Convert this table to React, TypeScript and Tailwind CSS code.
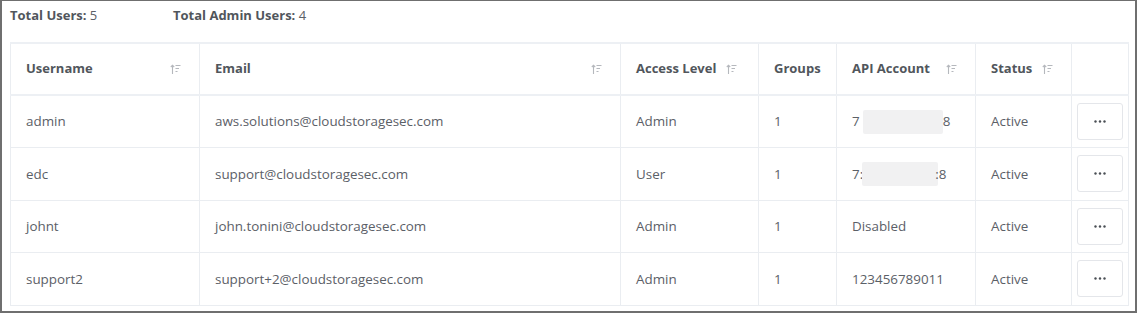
import React from 'react';

interface UserRow {
  username: string;
  email: string;
  access: string;
  groups: number;
  api: 'masked' | 'masked2' | string;
  status: string;
}

const rows: UserRow[] = [
  { username: 'admin', email: 'aws.solutions@cloudstoragesec.com', access: 'Admin', groups: 1, api: 'masked', status: 'Active' },
  { username: 'edc', email: 'support@cloudstoragesec.com', access: 'User', groups: 1, api: 'masked2', status: 'Active' },
  { username: 'johnt', email: 'john.tonini@cloudstoragesec.com', access: 'Admin', groups: 1, api: 'Disabled', status: 'Active' },
  { username: 'support2', email: 'support+2@cloudstoragesec.com', access: 'Admin', groups: 1, api: '123456789011', status: 'Active' },
];

function SortIcon() {
  return (
    <svg width="11" height="11" viewBox="0 0 11 11" className="shrink-0">
      <path d="M2.5 10V1.2M0.8 3L2.5 1.2L4.2 3" stroke="#b5b8bd" strokeWidth="1.1" fill="none" />
      <path d="M5.5 1.5H10.5M5.5 4.5H9M5.5 7.5H7.5" stroke="#b5b8bd" strokeWidth="1.1" fill="none" />
    </svg>
  );
}

function HeaderCell({ label, sortable, w, spread }: { label: string; sortable?: boolean; w: string; spread?: boolean }) {
  return (
    <th className={`${w} h-[52px] border-x border-y-2 border-x-[#eaedf1] border-y-[#edf0f4] px-[15px] text-left font-bold text-[13px] text-[#51565c]`}>
      <div className={`flex items-center ${spread ? 'justify-between pr-[3px]' : 'gap-[10px]'}`}>
        <span>{label}</span>
        {sortable && <SortIcon />}
      </div>
    </th>
  );
}

function ApiCell({ api }: { api: string }) {
  if (api === 'masked' || api === 'masked2') {
    return (
      <div className="flex items-center">
        <span>{api === 'masked' ? '7' : '7:'}</span>
        <span className={`h-[24px] ${api === 'masked' ? 'w-[80px] ml-[3px]' : 'w-[76px] -ml-[1px]'} bg-[#f1f1f2] rounded-[2px]`} />
        <span className={api === 'masked' ? '' : '-ml-[3px]'}>{api === 'masked' ? '8' : ':8'}</span>
      </div>
    );
  }
  return <span>{api}</span>;
}

export default function App() {
  const td = 'border border-[#eaedf1] px-[15px] h-[52.5px] text-[13.4px] text-[#5b6067] font-normal';
  return (
    <div className="w-[1137px] h-[313px] border-t border-x-2 border-b-2 border-[#6f6f6f] pl-[8px] bg-white" style={{ fontFamily: '"Open Sans", "Noto Sans", sans-serif' }}>
      <div className="flex h-[30px] items-center text-[13px] text-[#5b6067]">
        <span className="w-[163px]"><b className="font-bold text-[#51565c]">Total Users:</b> 5</span>
        <span><b className="font-bold text-[#51565c]">Total Admin Users:</b> 4</span>
      </div>
      <div className="pt-[11px]">
        <table className="w-[1118px] border-collapse table-fixed">
          <thead>
            <tr>
              <HeaderCell label="Username" sortable spread w="w-[189px]" />
              <HeaderCell label="Email" sortable spread w="w-[421px]" />
              <HeaderCell label="Access Level" sortable w="w-[138px]" />
              <HeaderCell label="Groups" w="w-[78px]" />
              <HeaderCell label="API Account" sortable spread w="w-[139px]" />
              <HeaderCell label="Status" sortable w="w-[96px]" />
              <HeaderCell label="" w="w-[57px]" />
            </tr>
          </thead>
          <tbody>
            {rows.map((r) => (
              <tr key={r.username}>
                <td className={td}>{r.username}</td>
                <td className={td}>{r.email}</td>
                <td className={td}>{r.access}</td>
                <td className={td}>{r.groups}</td>
                <td className={td}><ApiCell api={r.api} /></td>
                <td className={td}>{r.status}</td>
                <td className="border border-[#eaedf1] px-[5px]">
                  <button className="w-[46px] h-[37px] border border-[#e4e6ea] rounded-[3px] flex items-center justify-center bg-white">
                    <svg width="12" height="3" viewBox="0 0 12 3">
                      <circle cx="1.5" cy="1.5" r="1.2" fill="#4a4f55" />
                      <circle cx="6" cy="1.5" r="1.2" fill="#4a4f55" />
                      <circle cx="10.5" cy="1.5" r="1.2" fill="#4a4f55" />
                    </svg>
                  </button>
                </td>
              </tr>
            ))}
          </tbody>
        </table>
      </div>
    </div>
  );
}
